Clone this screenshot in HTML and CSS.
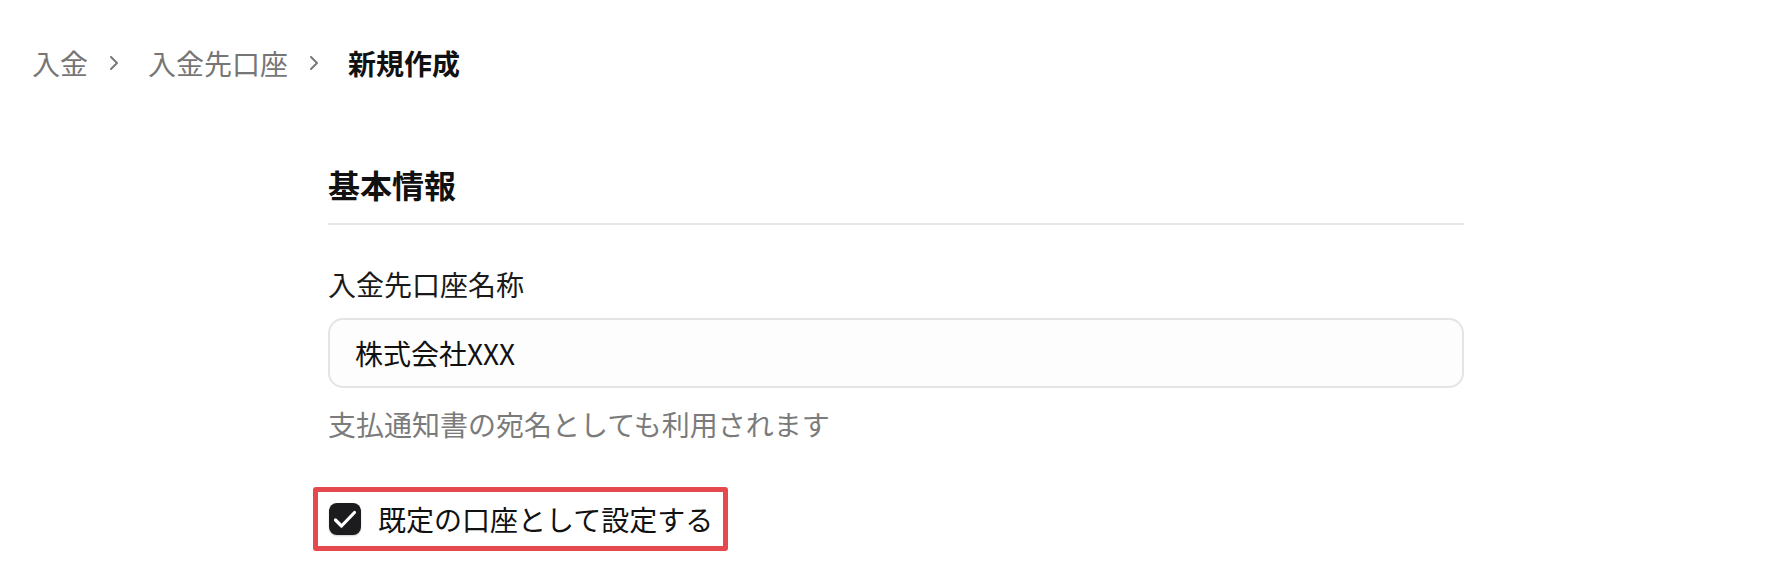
FILE: index.html
```html
<!DOCTYPE html>
<html lang="ja">
<head>
  <meta charset="UTF-8" />
  <meta name="viewport" content="width=device-width, initial-scale=1.0" />
  <title>入金先口座 新規作成</title>
  <link rel="stylesheet" href="styles.css">
</head>
<body>
  <nav class="breadcrumb">
    <a href="#">入金</a>
    <svg class="chevron" width="8" height="14" viewBox="0 0 8 14">
      <path d="M1 1 L7 7 L1 13" />
    </svg>
    <a href="#">入金先口座</a>
    <svg class="chevron" width="8" height="14" viewBox="0 0 8 14">
      <path d="M1 1 L7 7 L1 13" />
    </svg>
    <span class="current">新規作成</span>
  </nav>

  <main class="form">
    <h2 class="section-title">基本情報</h2>

    <label class="field-label" for="accountName">入金先口座名称</label>
    <input id="accountName" class="text-input" type="text" value="株式会社XXX">
    <p class="help">支払通知書の宛名としても利用されます</p>

    <label class="check-row">
      <span class="checkbox">
        <svg width="32" height="32" viewBox="0 0 32 32">
          <path d="M6.5 17 L12.5 23 L25.5 9.5" />
        </svg>
      </span>
      <span class="check-label">既定の口座として設定する</span>
    </label>
  </main>
</body>
</html>
```

FILE: styles.css
```css
body {
  margin: 0;
  font-family: "Noto Sans CJK JP", "Noto Sans", sans-serif;
  color: #1a1a1a;
  background-color: #fff;
}
.breadcrumb {
  display: flex;
  align-items: center;
  padding: 43px 32px 0;
  font-size: 28px;
  line-height: 40px;
}
.breadcrumb a {
  color: #767676;
  text-decoration: none;
}
.breadcrumb .current {
  font-weight: bold;
  color: #111;
}
.chevron {
  margin: 0 30px 0 22px;
  fill: none;
  stroke: #7a7a7a;
  stroke-width: 2;
  stroke-linecap: round;
  stroke-linejoin: round;
}
.form {
  max-width: 1136px;
  margin: 0 auto;
  padding-top: 77px;
}
.section-title {
  margin: 0;
  font-size: 32px;
  line-height: 48px;
  font-weight: bold;
  color: #111;
  padding-bottom: 15px;
  border-bottom: 2px solid #e6e6ea;
}
.field-label {
  display: block;
  margin-top: 39px;
  font-size: 28px;
  line-height: 40px;
}
.text-input {
  display: block;
  box-sizing: border-box;
  width: 100%;
  height: 70px;
  margin-top: 14px;
  padding: 0 25px;
  font-family: inherit;
  font-size: 28px;
  color: #111;
  border: 2px solid #e4e4e4;
  border-radius: 15px;
  background-color: #fdfdfd;
  outline: none;
}
.help {
  margin: 16px 0 0;
  font-size: 28px;
  line-height: 40px;
  color: #7b7b7b;
}
.check-row {
  display: flex;
  align-items: center;
  gap: 17px;
  width: fit-content;
  margin: 43px 0 0 -15px;
  padding: 10px 10px 10px 11px;
  border: 5px solid #e5484d;
  border-radius: 3px;
}
.checkbox {
  display: flex;
  width: 32px;
  height: 32px;
  border-radius: 8px;
  background-color: #1c1c1e;
  box-shadow: 0 1px 2px rgba(0, 0, 0, 0.2);
}
.checkbox path {
  fill: none;
  stroke: #fff;
  stroke-width: 3.2;
  stroke-linecap: round;
  stroke-linejoin: round;
}
.check-label {
  font-size: 28px;
  line-height: 34px;
  color: #111;
}
```
